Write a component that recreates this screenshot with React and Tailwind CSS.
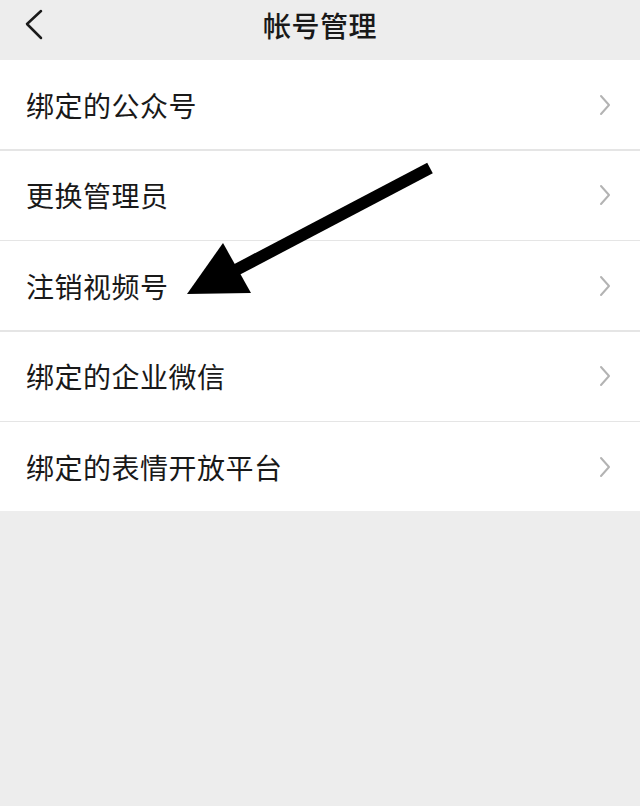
const items = ["绑定的公众号", "更换管理员", "注销视频号", "绑定的企业微信", "绑定的表情开放平台"];

const Chevron = () => (
  <svg width="14" height="24" viewBox="0 0 14 24" className="shrink-0">
    <path d="M3 3 L11 12 L3 21" fill="none" stroke="#b3b3b3" strokeWidth="2" strokeLinecap="round" strokeLinejoin="round" />
  </svg>
);

const App = () => {
  return (
    <div
      className="relative w-[640px] h-[806px] bg-[#ededed] overflow-hidden"
      style={{ fontFamily: '"Noto Sans CJK SC", "Noto Sans", sans-serif' }}
    >
      {/* header */}
      <div className="relative h-[60px]">
        <div className="h-[50px] flex items-center justify-center">
          <span className="text-[28px] font-medium text-[#191919] tracking-[0.5px]">帐号管理</span>
        </div>
        <svg width="30" height="40" viewBox="0 0 30 40" className="absolute left-[15px] top-[5px]">
          <path d="M26 6 L12 19 L26 33" fill="none" stroke="#1a1a1a" strokeWidth="2.5" strokeLinecap="round" strokeLinejoin="round" />
        </svg>
      </div>

      {/* list */}
      <div className="bg-white">
        {items.map((t, i) => (
          <div key={t}>
            <div className="h-[89px] flex items-center justify-between pl-[26px] pr-[28px]">
              <span className="text-[28px] text-[#191919] tracking-[0.5px]">{t}</span>
              <Chevron />
            </div>
            {i < items.length - 1 && <div className="h-[1.5px] bg-[#e5e5e5]" />}
          </div>
        ))}
      </div>

      {/* annotation arrow */}
      <svg className="absolute inset-0 pointer-events-none" width="640" height="806" viewBox="0 0 640 806">
        <line x1="430" y1="168" x2="232" y2="272" stroke="#000" strokeWidth="12" />
        <polygon points="223,243 187,294 251,293" fill="#000" />
      </svg>
    </div>
  );
};

export default App;
